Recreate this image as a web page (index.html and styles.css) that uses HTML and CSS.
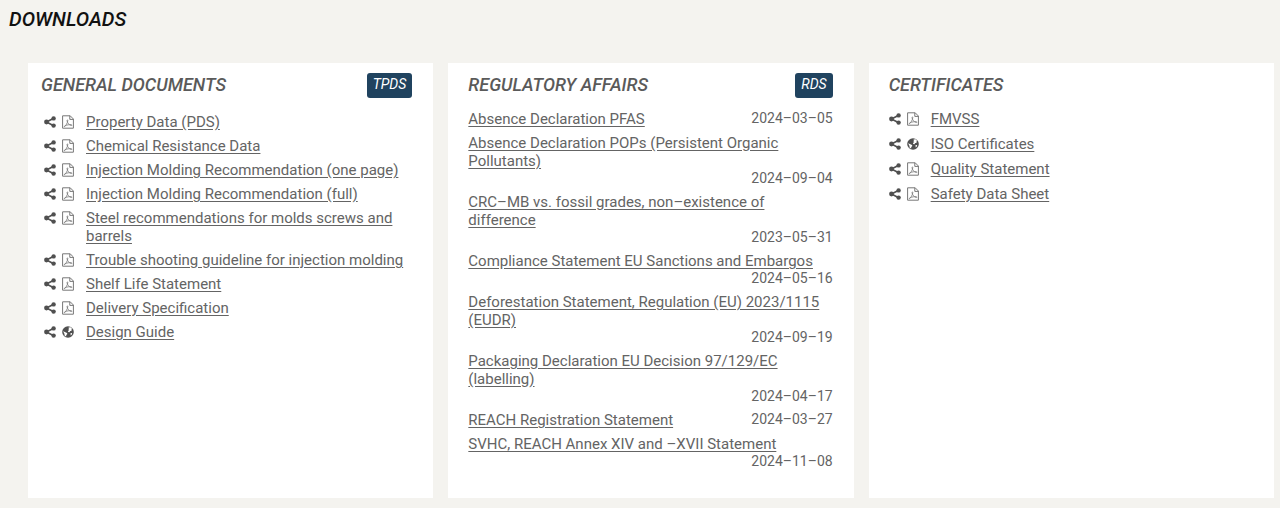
FILE: index.html
```
<!DOCTYPE html>
<html lang="en">
<head>
    <meta charset="UTF-8">
    <meta name="viewport" content="width=device-width, initial-scale=1">
    <title>Downloads</title>
    <link rel="stylesheet" href="styles.css">
</head>
<body>
    <svg class="sprite" aria-hidden="true">
        <symbol id="share" viewBox="0 0 12 12">
            <path d="M9.7 2.3 2.5 6l7.2 3.7" fill="none" stroke="currentColor" stroke-width="1.6"/>
            <circle cx="9.6" cy="2.4" r="2.2"/>
            <circle cx="2.5" cy="6" r="2.4"/>
            <circle cx="9.6" cy="9.6" r="2.2"/>
        </symbol>
        <symbol id="pdf" viewBox="0 0 12 14">
            <path d="M.6.8v12.4h10.8V4L8.2.8zM7.8.8v3.6h3.6" fill="none" stroke="currentColor"/>
            <path d="M2.3 11.7c1.5-.8 3.3-3.8 3.5-6.2 0-.9-1-.7-.8.2.4 2.2 2 4.2 4.2 4.8 1 .2 1-.7.1-.8-2-.2-4.4.2-6.2 1.1-.9.4-1.2.8-.8.9z" fill="none" stroke="currentColor" stroke-width=".8"/>
        </symbol>
        <symbol id="globe" viewBox="0 0 12 12">
            <circle cx="6" cy="6" r="5.8"/>
            <path d="M6.5 1.4 8.6 1.2l1.6 1.7-.9.8.3 1.2-1.3.2-.9 1.2-1.2-.3-.2-1.1 1.2-.8-.9-.9.6-.8zM1.1 5.2l1.8.7 2.1 1.2.3 1-1 1-.2 1.5-1.4-.9-.3-1.9zM8.4 7.3l1.4-.3.4.9-1.4 1.5z" fill="#fff"/>
        </symbol>
    </svg>

    <h1>Downloads</h1>

    <main class="cards">
        <section class="card general">
            <div class="card-head">
                <h2>General Documents</h2>
                <button type="button" class="badge">TPDS</button>
            </div>
            <ul class="files">
                <li><svg class="icon"><use href="#share"/></svg><svg class="icon pdf"><use href="#pdf"/></svg><a href="#">Property Data (PDS)</a></li>
                <li><svg class="icon"><use href="#share"/></svg><svg class="icon pdf"><use href="#pdf"/></svg><a href="#">Chemical Resistance Data</a></li>
                <li><svg class="icon"><use href="#share"/></svg><svg class="icon pdf"><use href="#pdf"/></svg><a href="#">Injection Molding Recommendation (one page)</a></li>
                <li><svg class="icon"><use href="#share"/></svg><svg class="icon pdf"><use href="#pdf"/></svg><a href="#">Injection Molding Recommendation (full)</a></li>
                <li><svg class="icon"><use href="#share"/></svg><svg class="icon pdf"><use href="#pdf"/></svg><a href="#">Steel recommendations for molds screws and barrels</a></li>
                <li><svg class="icon"><use href="#share"/></svg><svg class="icon pdf"><use href="#pdf"/></svg><a href="#">Trouble shooting guideline for injection molding</a></li>
                <li><svg class="icon"><use href="#share"/></svg><svg class="icon pdf"><use href="#pdf"/></svg><a href="#">Shelf Life Statement</a></li>
                <li><svg class="icon"><use href="#share"/></svg><svg class="icon pdf"><use href="#pdf"/></svg><a href="#">Delivery Specification</a></li>
                <li><svg class="icon"><use href="#share"/></svg><svg class="icon"><use href="#globe"/></svg><a href="#">Design Guide</a></li>
            </ul>
        </section>

        <section class="card">
            <div class="card-head">
                <h2>Regulatory Affairs</h2>
                <button type="button" class="badge">RDS</button>
            </div>
            <ul class="dated">
                <li><a href="#">Absence Declaration PFAS</a><time>2024–03–05</time></li>
                <li><a href="#">Absence Declaration POPs (Persistent Organic Pollutants)</a><time>2024–09–04</time></li>
                <li><a href="#">CRC–MB vs. fossil grades, non–existence of difference</a><time>2023–05–31</time></li>
                <li><a href="#">Compliance Statement EU Sanctions and Embargos</a><time>2024–05–16</time></li>
                <li><a href="#">Deforestation Statement, Regulation (EU) 2023/1115 (EUDR)</a><time>2024–09–19</time></li>
                <li><a href="#">Packaging Declaration EU Decision 97/129/EC (labelling)</a><time>2024–04–17</time></li>
                <li><a href="#">REACH Registration Statement</a><time>2024–03–27</time></li>
                <li><a href="#">SVHC, REACH Annex XIV and –XVII Statement</a><time>2024–11–08</time></li>
            </ul>
        </section>

        <section class="card">
            <div class="card-head">
                <h2>Certificates</h2>
            </div>
            <ul class="files">
                <li><svg class="icon"><use href="#share"/></svg><svg class="icon pdf"><use href="#pdf"/></svg><a href="#">FMVSS</a></li>
                <li><svg class="icon"><use href="#share"/></svg><svg class="icon"><use href="#globe"/></svg><a href="#">ISO Certificates</a></li>
                <li><svg class="icon"><use href="#share"/></svg><svg class="icon pdf"><use href="#pdf"/></svg><a href="#">Quality Statement</a></li>
                <li><svg class="icon"><use href="#share"/></svg><svg class="icon pdf"><use href="#pdf"/></svg><a href="#">Safety Data Sheet</a></li>
            </ul>
        </section>
    </main>
</body>
</html>
```
FILE: styles.css
```
* {
    box-sizing: border-box;
}

body {
    margin: 0;
    padding: 8px 6px 9px 9px;
    background: #f4f3ef;
    color: #646464;
    font-family: Roboto, Arial, sans-serif;
    font-size: 15px;
    line-height: 18px;
}

h1,
h2 {
    margin: 0;
    font-weight: 500;
    font-style: italic;
    text-transform: uppercase;
}

h1 {
    color: #111;
    font-size: 20px;
    line-height: 22px;
}

h2 {
    color: #5a5a5a;
    font-size: 18px;
    line-height: 24px;
}

.sprite {
    display: none;
}

.cards {
    display: grid;
    grid-template-columns: repeat(3, 1fr);
    gap: 15px;
    margin: 33px 0 0 19px;
}

.card {
    padding: 10px 21px 28px 20px;
    background: #fff;
}

.card.general {
    padding-left: 13px;
}

.card-head {
    display: flex;
    justify-content: space-between;
    align-items: flex-start;
    height: 37px;
}

.badge {
    padding: 2px 6px 5px;
    border: 0;
    border-radius: 3px;
    background: #20435f;
    color: #fff;
    font: italic 14px/18px Roboto, Arial, sans-serif;
    cursor: pointer;
}

ul {
    display: flex;
    flex-direction: column;
    margin: 0;
    padding: 0;
    list-style: none;
}

a {
    color: inherit;
    text-decoration: underline;
    text-underline-offset: 2px;
}

a:hover {
    color: #20435f;
}

.files {
    gap: 7px;
}

.files li {
    display: flex;
    gap: 6px;
}

.files a {
    margin-left: 6px;
}

.general .files {
    gap: 6px;
    margin-top: 3px;
    padding-left: 3px;
}

.icon {
    flex: none;
    width: 12px;
    height: 12px;
    margin-top: 3px;
    fill: #505050;
    color: #505050;
}

.icon.pdf {
    height: 14px;
    margin-top: 2px;
    color: #777;
}

.dated {
    gap: 6px;
}

.dated li {
    display: flex;
    flex-wrap: wrap;
}

.dated time {
    margin-left: auto;
    font-size: 14px;
    line-height: 17px;
}
```
